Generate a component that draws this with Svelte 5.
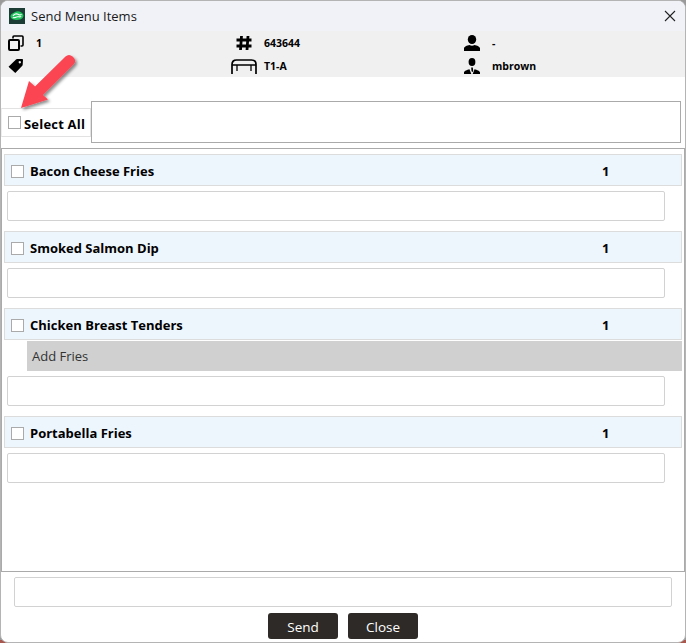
<script>
  const items = [
    { name: 'Bacon Cheese Fries', qty: 1, mods: [] },
    { name: 'Smoked Salmon Dip', qty: 1, mods: [] },
    { name: 'Chicken Breast Tenders', qty: 1, mods: ['Add Fries'] },
    { name: 'Portabella Fries', qty: 1, mods: [] }
  ];
</script>

<div class="page">
  <div class="window">
    <header class="title">
      <svg class="logo" viewBox="0 0 16 16" width="16" height="16">
        <rect width="16" height="16" fill="#1c3d36" />
        <path d="M1.500 8.500C1.500 6 4 5.500 5.500 4.300 7.500 3 10 3 12 4.300c2 1.200 3 2.700 2.300 4.500-1 2.500-3.500 3.200-6.300 3.200S1.500 11 1.500 8.500z" fill="#1fc45c" />
        <path d="M4 8c1.200-2 3.500-2.600 5-1.700s2.800 1 3.500 0M3.800 9.500c2 .8 3.300-.8 4.700-.8s2.500.6 3.700-.3" fill="none" stroke="#fff" stroke-width="1.100" />
      </svg>
      <span>Send Menu Items</span>
      <svg class="x" viewBox="0 0 12 12" width="12" height="12">
        <path d="M1 1l10 10M11 1L1 11" stroke="#222" stroke-width="1.100" fill="none" />
      </svg>
    </header>

    <section class="info">
      <div class="cell">
        <span class="ic">
          <svg viewBox="0 0 16 16" width="16" height="16">
            <rect x="1" y="5" width="10" height="10" rx="1" fill="none" stroke="#000" stroke-width="2" />
            <path d="M5 3.500V2a1 1 0 0 1 1-1h8a1 1 0 0 1 1 1v8a1 1 0 0 1-1 1h-1.500" fill="none" stroke="#000" stroke-width="1.600" />
          </svg>
        </span>
        <b>1</b>
      </div>
      <div class="cell">
        <span class="ic">
          <svg viewBox="0 0 16 16" width="16" height="16">
            <path d="M5.500 1L4.500 15M12 1l-1 14M.5 5h15M.5 11h15" stroke="#000" stroke-width="2.800" fill="none" />
          </svg>
        </span>
        <b>643644</b>
      </div>
      <div class="cell">
        <span class="ic">
          <svg viewBox="0 0 16 16" width="16" height="16">
            <ellipse cx="8" cy="4.500" rx="4.200" ry="4.500" />
            <path d="M0 16v-2.500c0-2 3-3 5.500-3.500 1.500 1 3.500 1 5 0 2.500.5 5.500 1.500 5.500 3.500V16z" />
          </svg>
        </span>
        <b>-</b>
      </div>
      <div class="cell">
        <span class="ic">
          <svg viewBox="0 0 16 16" width="16" height="16">
            <path d="M.5 8.800 8 1.500a1.500 1.500 0 0 1 1-.5l5 .1c.6 0 1 .4 1 1l-.3 4.700c0 .4-.2.7-.4 1l-7 7.200zM11.800 3a1.200 1.200 0 1 0 .01 0z" fill-rule="evenodd" />
          </svg>
        </span>
      </div>
      <div class="cell table">
        <span class="ic">
          <svg viewBox="0 0 26 16" width="26" height="16">
            <path d="M1 16V6.500C1 3.500 3 2 5.500 2h15C23 2 25 3.500 25 6.500V16" fill="none" stroke="#000" stroke-width="1.700" />
            <path d="M1 7h24" stroke="#000" stroke-width="1.700" />
            <path d="M6 7v6M20 7v6" stroke="#000" stroke-width="1.300" />
          </svg>
        </span>
        <b>T1-A</b>
      </div>
      <div class="cell">
        <span class="ic">
          <svg viewBox="0 0 16 16" width="16" height="16">
            <ellipse cx="8" cy="4" rx="3.400" ry="4" />
            <path d="M0 16v-1.500c0-1.500 3-2.500 5.500-3.200L7.300 16zM16 16v-1.500c0-1.500-3-2.500-5.500-3.200L8.700 16zM7.200 9.500h1.600l.4 3-.6 1.500h-.6l-.6-1.500z" />
          </svg>
        </span>
        <b>mbrown</b>
      </div>
    </section>

    <section class="select-row">
      <label class="select-all">
        <span class="box"></span>
        <span class="select-text">Select All</span>
      </label>
      <div class="note"></div>
    </section>

    <section class="list">
      {#each items as item}
        <article class="item">
          <div class="head">
            <span class="box"></span>
            <span class="name">{item.name}</span>
            <span class="qty">{item.qty}</span>
          </div>
          {#each item.mods as mod}
            <div class="mod">{mod}</div>
          {/each}
          <div class="field"></div>
        </article>
      {/each}
    </section>

    <footer class="footer">
      <div class="comment"></div>
      <div class="actions">
        <button type="button">Send</button>
        <button type="button">Close</button>
      </div>
    </footer>

    <svg class="arrow" viewBox="0 0 60 58" width="60" height="58">
      <defs>
        <filter id="sh" x="-20%" y="-20%" width="150%" height="150%">
          <feDropShadow dx="2" dy="2" stdDeviation="1.500" flood-color="#000" flood-opacity="0.45" />
        </filter>
      </defs>
      <path d="M1 54 L9 27 L15 32.500 L45.500 2.500 Q49 -.5 52.500 2.500 L54 4 Q56.500 7.500 53.500 10.500 L23 41 L28 45.500 Z" fill="#fb4452" filter="url(#sh)" />
    </svg>
  </div>
</div>

<style>
  :global(body) {
    margin: 0;
    background: #fff;
  }
  .page {
    width: 686px;
    height: 643px;
    overflow: hidden;
    background: linear-gradient(to bottom, #9a9a9a 0, #9a9a9a 640px, #a8584f 640px);
  }
  .window {
    position: relative;
    box-sizing: border-box;
    width: 686px;
    height: 643px;
    display: flex;
    flex-direction: column;
    background: #fff;
    border: 1px solid #b4b4b4;
    border-radius: 8px;
    overflow: hidden;
    font-family: "Open Sans", "Noto Sans", sans-serif;
    color: #000;
  }
  .title {
    height: 30px;
    flex: none;
    display: flex;
    align-items: center;
    gap: 6px;
    padding: 0 9px 0 8px;
    background: #f0f2f8;
    font-size: 13px;
    color: #1a1a1a;
  }
  .title span { flex: 1; }
  .logo { flex: none; }
  .info {
    height: 46px;
    flex: none;
    box-sizing: border-box;
    display: grid;
    grid-template-columns: 228px 228px 1fr;
    grid-template-rows: 23px 23px;
    padding-left: 7px;
    background: #f0f0f0;
  }
  .cell {
    display: flex;
    align-items: center;
    font-size: 10.500px;
    font-weight: 700;
  }
  .ic {
    width: 16px;
    display: flex;
    justify-content: flex-start;
    margin-right: 12px;
  }
  .table .ic {
    width: 26px;
    margin-left: -5px;
    margin-right: 7px;
  }
  .cell b { font-weight: 700; }
  .select-row {
    flex: none;
    display: flex;
    align-items: flex-start;
    margin-top: 24px;
    height: 47px;
    box-sizing: border-box;
  }
  .select-all {
    box-sizing: border-box;
    width: 90px;
    height: 29px;
    margin-top: 7px;
    display: flex;
    align-items: center;
    gap: 3px;
    padding-left: 6px;
    border: 1px solid #e2e2e2;
    border-left-color: #eee;
    font-size: 13px;
    font-weight: 700;
  }
  .select-text {
    padding-top: 2px;
    letter-spacing: 0.2px;
  }
  .box {
    flex: none;
    box-sizing: border-box;
    width: 13px;
    height: 13px;
    background: #fff;
    border: 1px solid #aaa;
  }
  .note {
    box-sizing: border-box;
    width: 590px;
    height: 42px;
    border: 1px solid #aaa;
  }
  .list {
    flex: 1;
    min-height: 0;
    box-sizing: border-box;
    display: flex;
    flex-direction: column;
    gap: 10px;
    padding: 5px 2px 0 2px;
    border: 1px solid #aaa;
  }
  .head {
    box-sizing: border-box;
    height: 32px;
    display: flex;
    align-items: center;
    padding: 2px 0 0 6px;
    background: #eef6fd;
    border: 1px solid #dcdcdc;
    font-size: 13px;
    font-weight: 700;
  }
  .name { margin-left: 6px; width: 572px; }
  .item { display: flex; flex-direction: column; }
  .mod {
    height: 30px;
    margin: 1px 0 0 23px;
    padding-left: 5px;
    display: flex;
    align-items: center;
    background: #d0d0d0;
    font-size: 13px;
    color: #333;
  }
  .field {
    box-sizing: border-box;
    width: 658px;
    height: 30px;
    margin: 5px 0 0 3px;
    border: 1px solid #d2d2d2;
    border-radius: 2px;
  }
  .footer {
    flex: none;
    height: 70px;
    box-sizing: border-box;
    padding: 5px 13px 0 13px;
  }
  .comment {
    box-sizing: border-box;
    width: 658px;
    height: 30px;
    border: 1px solid #d2d2d2;
    border-radius: 2px;
  }
  .actions {
    display: flex;
    justify-content: center;
    gap: 10px;
    margin-top: 6px;
  }
  button {
    width: 70px;
    height: 26px;
    padding: 2px 0 0;
    border: none;
    border-radius: 3px;
    background: #2e2a27;
    color: #fff;
    font: 13.500px "Open Sans", "Noto Sans", sans-serif;
  }
  .arrow {
    position: absolute;
    left: 19px;
    top: 53px;
  }
</style>
